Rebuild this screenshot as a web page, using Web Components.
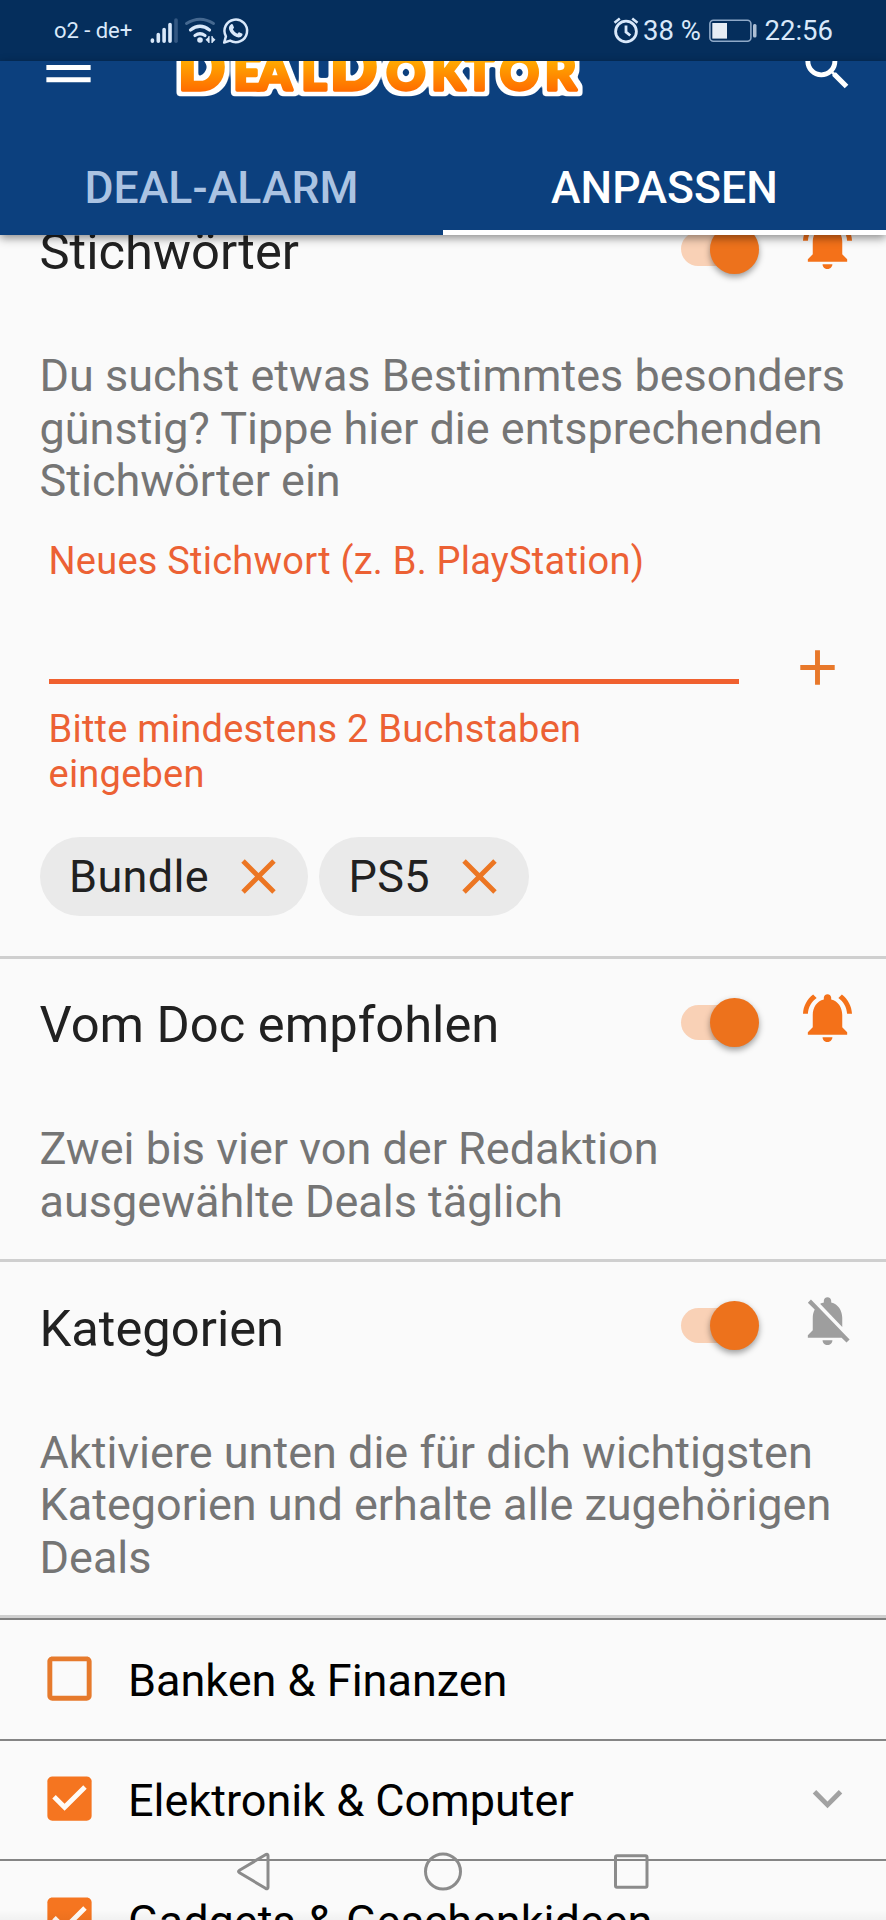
<!DOCTYPE html>
<html lang="de">
<head>
<meta charset="utf-8">
<title>DealDoktor – Deal-Alarm</title>
<style>
html,body{margin:0;padding:0}
body{width:886px;height:1920px;overflow:hidden;background:#fafafa;font-family:Roboto,"Liberation Sans",sans-serif}
</style>
</head>
<body>
<deal-app></deal-app>
<script>
function define(name, html, setup) {
  customElements.define(name, class extends HTMLElement {
    constructor() {
      super();
      this.attachShadow({mode: 'open'}).innerHTML = html;
    }
    connectedCallback() { if (setup) setup(this, this.shadowRoot); }
  });
}

function icon(name, cls) {
  const i = document.createElement('md-icon');
  i.setAttribute('name', name);
  if (cls) i.className = cls;
  return i;
}

const ICONS = {
  menu: 'M3 18h18v-2H3v2zm0-5h18v-2H3v2zm0-7v2h18V6H3z',
  search: 'M15.5 14h-.79l-.28-.27C15.41 12.59 16 11.11 16 9.5 16 5.91 13.09 3 9.5 3S3 5.91 3 9.5 5.91 16 9.5 16c1.61 0 3.09-.59 4.23-1.57l.27.28v.79l5 4.99L20.49 19l-4.99-5zm-6 0C7.01 14 5 11.99 5 9.5S7.01 5 9.5 5 14 7.01 14 9.5 11.99 14 9.5 14z',
  bell: 'M7.58 4.08L6.15 2.65C3.75 4.48 2.17 7.3 2.03 10.5h2c.15-2.65 1.51-4.97 3.55-6.42zm12.39 6.42h2c-.15-3.2-1.73-6.02-4.12-7.85l-1.42 1.43c2.02 1.45 3.39 3.77 3.54 6.42zM18 11c0-3.07-1.64-5.64-4.5-6.32V4c0-.83-.67-1.5-1.5-1.5s-1.5.67-1.5 1.5v.68C7.63 5.36 6 7.92 6 11v5l-2 2v1h16v-1l-2-2v-5zm-6 11c.14 0 .27-.01.4-.04.65-.14 1.18-.58 1.44-1.18.1-.24.15-.5.15-.78h-4c.01 1.1.9 2 2.01 2z',
  belloff: 'M20 18.69L7.84 6.14 5.27 3.49 4 4.76l2.8 2.8v.01c-.52.99-.8 2.16-.8 3.42v5l-2 2v1h13.73l2 2L21 19.72l-1-1.03zM12 22c1.11 0 2-.89 2-2h-4c0 1.11.89 2 2 2zm6-7.32V11c0-3.08-1.64-5.64-4.5-6.32V4c0-.83-.67-1.5-1.5-1.5s-1.5.67-1.5 1.5v.68c-.15.03-.29.08-.42.12-.1.03-.2.07-.3.11h-.01c-.01 0-.01 0-.02.01-.23.09-.46.2-.68.31 0 0-.01 0-.01.01L18 14.68z',
  close: 'M19 6.41L17.59 5 12 10.59 6.41 5 5 6.41 10.59 12 5 17.59 6.41 19 12 13.41 17.59 19 19 17.59 13.41 12z',
  plus: 'M19 13h-6v6h-2v-6H5v-2h6V5h2v6h6v2z',
  down: 'M7.41 8.59L12 13.17l4.59-4.58L18 10l-6 6-6-6 1.41-1.41z',
  box: 'M19 5v14H5V5h14m0-2H5c-1.1 0-2 .9-2 2v14c0 1.1.9 2 2 2h14c1.1 0 2-.9 2-2V5c0-1.1-.9-2-2-2z',
  checked: 'M19 3H5c-1.11 0-2 .9-2 2v14c0 1.1.89 2 2 2h14c1.11 0 2-.9 2-2V5c0-1.1-.89-2-2-2z'
};

define('md-icon', `<style>:host{display:block;width:59px;height:59px;flex:none}svg{display:block;width:100%;height:100%;fill:currentColor}</style>
<svg viewBox="0 0 24 24"><path/></svg>`, (el, root) => {
  const name = el.getAttribute('name');
  root.querySelector('path').setAttribute('d', ICONS[name]);
  if (name === 'checked') root.querySelector('svg').insertAdjacentHTML('beforeend', '<path fill="#fffaf5" d="M10 17l-5-5 1.41-1.41L10 14.17l7.59-7.59L19 8z"/>');
});

define('status-bar', `<style>
:host{display:flex;height:61px;background:#052e5c;color:#d9e8fa;box-sizing:border-box;padding:0 53px 0 54px;align-items:flex-start}
svg{display:block;flex:none}
.c{font-size:22px;line-height:26px;margin-top:18px;width:94px;white-space:nowrap;letter-spacing:-.05px}
.t{font-size:27.500px;line-height:32px;margin-top:15px;white-space:nowrap}
.g{flex:1}
</style>
<span class="c">o2 - de+</span>
<svg width="104" height="61" viewBox="148 0 104 61" fill="none" stroke="#d9e8fa" stroke-width="3.6" stroke-linecap="round">
<path d="M152.4 40v1.3M158.3 34.5v6.8M164.1 29.5v11.8M170 24.5v16.8"/><path d="M176 20v21.3" stroke="#335782"/>
<path d="M186.5 23.5q13.5-8.5 27 0" stroke="#456890" stroke-width="3"/>
<path d="M190.5 30q9.500-7.500 19 0M195 35.500q5-3.500 10 0" stroke-width="3.200"/>
<circle cx="200" cy="40" r="2.800" fill="#d9e8fa" stroke="none"/>
<path d="M205.500 39.800l3.500-3.200v6.400zM215.500 39.800l-3.500-3.200v6.400z" fill="#d9e8fa" stroke="none"/>
<path d="M209 36v7M212 36v7" stroke-width="1.200" stroke-linecap="butt"/>
<path d="M224.200 42.500l1.700-6.200a11.300 11.300 0 1 1 4.200 4.300z" stroke-width="2.500" stroke-linejoin="round"/>
<path fill="#d9e8fa" stroke="none" d="M231.200 24.300c.8-.5 1.400-.2 1.700.5l1 2.400c.2.600-.1 1-1 2 1 2 2.600 3.500 4.700 4.500.9-1.200 1.400-1.600 2-1.300l2.400 1.200c.7.400.6 1.200.2 2-1 1.800-3.300 2.400-5.600 1.500-3.700-1.300-6.300-4.200-7.400-7.300-.8-2.300.3-4.600 2-5.500z"/>
</svg>
<span class="g"></span>
<svg width="31" height="61" viewBox="612 0 31 61" fill="none" stroke="#d9e8fa" stroke-width="2.800"><circle cx="626" cy="31.500" r="10.400"/><path d="M626 25.500v6.500l4.300 3.500"/><path d="M614.500 22.700l5.300-4.200M637.500 22.700l-5.300-4.200" stroke-width="2.600"/></svg>
<span class="t" style="width:66px">38 %</span>
<svg width="50" height="61" viewBox="709 0 50 61"><rect x="709.900" y="20.200" width="41" height="21" rx="3.500" fill="none" stroke="#8fa9c8" stroke-width="1.600"/><rect x="712.300" y="23" width="14.700" height="15.600" fill="#e6edf5"/><rect x="753" y="24" width="3.500" height="13.500" rx="1.500" fill="#aebfd4"/></svg>
<span class="t" style="width:74px;text-align:right">22:56</span>`);

define('deal-logo', `<style>:host{display:block;flex:none}svg{display:block}
text{font-family:Lato,sans-serif;font-weight:900;stroke-linejoin:round}</style>
<svg width="420" height="59" viewBox="170 37.500 420 59">
<defs><linearGradient id="g" gradientUnits="userSpaceOnUse" x1="0" y1="56" x2="0" y2="91"><stop offset="0" stop-color="#ffb300"/><stop offset="1" stop-color="#ff6c00"/></linearGradient>
<filter id="o" filterUnits="userSpaceOnUse" x="165" y="30" width="430" height="72" color-interpolation-filters="sRGB"><feMorphology in="SourceAlpha" operator="dilate" radius="3.500"/><feGaussianBlur stdDeviation="1.400"/><feComponentTransfer><feFuncR type="linear" slope="0" intercept="1"/><feFuncG type="linear" slope="0" intercept="1"/><feFuncB type="linear" slope="0" intercept="1"/><feFuncA type="linear" slope="4" intercept="-1"/></feComponentTransfer><feMerge><feMergeNode/><feMergeNode in="SourceGraphic"/></feMerge></filter></defs>
<text y="89" fill="url(#g)" stroke="url(#g)" stroke-width="3.500" filter="url(#o)" font-size="48"><tspan font-size="62" x="178">D</tspan><tspan x="233.500 258 301.500">EAL</tspan><tspan font-size="62" x="330">D</tspan><tspan x="386.500 431.500 465 500 545">OKTOR</tspan></text>
</svg>`);

define('tab-item', `<style>
:host{display:block;flex:1;box-sizing:border-box;height:138px;padding-top:65px;text-align:center;font-size:44.500px;line-height:52px;font-weight:500;color:#abc3e2;border-bottom:5px solid transparent;white-space:nowrap;letter-spacing:.1px}
:host([active]){color:#fff;border-color:#fff}
</style><slot></slot>`);

define('app-bar', `<style>
:host{display:block;height:173.500px;background:#0c407e;color:#fff;position:relative;z-index:2;box-shadow:0 3px 9px rgba(0,0,0,.45)}
.clip{height:100%;overflow:hidden}
.bar{display:flex;margin-top:-23.500px;height:59px;padding:0 29.500px 0 39px;justify-content:space-between}
deal-logo{margin-right:135px}
.tabs{display:flex}
</style><div class="clip"><div class="bar"><md-icon name="menu"></md-icon><deal-logo></deal-logo><md-icon name="search"></md-icon></div><div class="tabs"><slot></slot></div></div>`);

define('toggle-switch', `<style>
:host{display:flex;align-items:center;justify-content:flex-end;width:78px;height:49px;flex:none}
b{flex:none;width:62px;height:34.500px;border-radius:18px;background:#f9d1b6;margin-right:-33px}
i{flex:none;position:relative;width:49px;height:49px;border-radius:50%;background:#ed721c;box-shadow:0 3px 6px rgba(0,0,0,.38)}
</style><b></b><i></i>`);

define('alarm-section', `<style>
:host{display:block;border-bottom:3px solid #cfcfcf;color:#212121}
header{display:flex;align-items:flex-start;height:164.600px;box-sizing:border-box;padding:29px 29.500px 0 39.500px}
h2{flex:1;margin:7.300px 0 0;font-weight:400;font-size:50.700px;line-height:60px;white-space:nowrap}
toggle-switch{margin:10px 38.500px 0 0}
md-icon{color:#f47119}
md-icon[name=belloff]{color:#9e9e9e}
p{margin:0;padding:0 30px 0 39.500px;font-size:45px;line-height:52.400px;color:#757575;white-space:pre-line}
footer{height:31px}
</style><header><h2></h2><toggle-switch></toggle-switch></header><p></p><slot></slot><footer></footer>`, (el, root) => {
  root.querySelector('h2').textContent = el.getAttribute('heading');
  root.querySelector('p').textContent = el.getAttribute('text');
  root.querySelector('header').append(icon(el.hasAttribute('muted') ? 'belloff' : 'bell'));
});

define('keyword-field', `<style>
:host{display:flex;padding:31.500px 39px 0 48px;color:#ec6134;font-size:38px;line-height:45px;letter-spacing:.23px}
.l{width:691px;padding-left:0}
.l div{text-indent:0}
.label,.err{padding-left:.5px}
.line{height:5px;background:#f0602f;margin:95.500px 0 23px 1px}
.err{width:600px}
md-icon{color:#e8782a;margin:99.500px 0 0 49px}
</style><div class="l"><div class="label">Neues Stichwort (z. B. PlayStation)</div><div class="line"></div><div class="err">Bitte mindestens 2 Buchstaben<br>eingeben</div></div><md-icon name="plus"></md-icon>`);

define('keyword-chip', `<style>
:host{display:flex;align-items:center;height:79px;border-radius:40px;background:#eaeaea;box-sizing:border-box;padding:0 19.500px 0 29.500px;color:#212121;font-size:45px;line-height:53px;gap:20.500px;letter-spacing:.35px}
md-icon{color:#ec7623}
</style><slot></slot><md-icon name="close"></md-icon>`);

define('chip-list', `<style>:host{display:flex;gap:11px;padding:39.500px 39.500px 9px}</style><slot></slot>`);

define('category-row', `<style>
:host{display:flex;align-items:center;height:120.600px;box-sizing:border-box;border-bottom:2px solid #858585;padding:0 29.500px 0 39.500px;font-size:45px;line-height:53px;color:#000;white-space:nowrap}
md-icon{color:#f57520;margin-top:-2px}
md-icon[name=box]{color:#e67a2c}
span{flex:1;padding:2px 0 0 29.500px}
md-icon.d{color:#a2a2a2}
</style><span><slot></slot></span>`, (el, root) => {
  root.querySelector('span').before(icon(el.hasAttribute('checked') ? 'checked' : 'box'));
  if (el.hasAttribute('expandable')) root.append(icon('down', 'd'));
});

define('nav-bar', `<style>:host{position:absolute;left:0;bottom:0;width:886px;height:96px;z-index:3;background:linear-gradient(transparent 86px,rgba(0,0,0,.035))}svg{display:block}</style>
<svg width="886" height="96" viewBox="0 1824 886 96" fill="none" stroke="#8b8b8b" stroke-width="3" stroke-linejoin="round"><path d="M239.500 1870.300q-2 1.200 0 2.400l26 15.600q2.500 1.300 2.500-1v-31.600q0-2.300-2.500-1z"/><circle cx="443" cy="1871.500" r="17.500"/><rect x="615.500" y="1855.700" width="31.500" height="31.500" rx="1.500"/></svg>`);

define('deal-app', `<style>
:host{display:flex;flex-direction:column;position:relative;width:886px;height:1920px;overflow:hidden;background:#fafafa}
main{flex:1;min-height:0;overflow:hidden}
.scroll{margin-top:-49px}
.cats{border-top:2px solid #808080}
</style>
<status-bar></status-bar>
<app-bar><tab-item>DEAL-ALARM</tab-item><tab-item active>ANPASSEN</tab-item></app-bar>
<main><div class="scroll">
<alarm-section heading="Stichwörter" text="Du suchst etwas Bestimmtes besonders
günstig? Tippe hier die entsprechenden
Stichwörter ein"><keyword-field></keyword-field><chip-list><keyword-chip>Bundle</keyword-chip><keyword-chip>PS5</keyword-chip></chip-list></alarm-section>
<alarm-section heading="Vom Doc empfohlen" text="Zwei bis vier von der Redaktion
ausgewählte Deals täglich"></alarm-section>
<alarm-section muted heading="Kategorien" text="Aktiviere unten die für dich wichtigsten
Kategorien und erhalte alle zugehörigen
Deals"></alarm-section>
<div class="cats"><category-row>Banken &amp; Finanzen</category-row><category-row checked expandable>Elektronik &amp; Computer</category-row><category-row checked>Gadgets &amp; Geschenkideen</category-row></div>
</div></main>
<nav-bar></nav-bar>`);
</script>
</body>
</html>
